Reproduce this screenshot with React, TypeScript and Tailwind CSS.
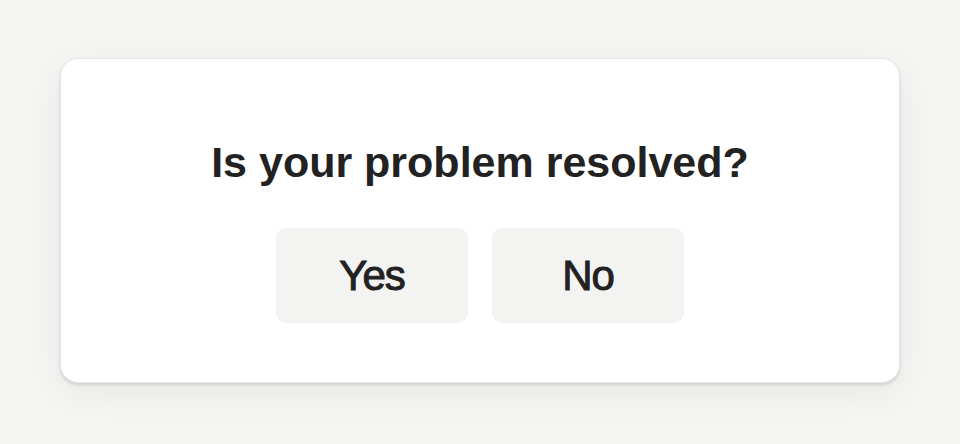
export default function App() {
  return (
    <div className="flex h-[444px] w-full items-start justify-center bg-[#f5f5f4] px-[60px] pt-[58px] font-['Liberation_Sans',Arial,sans-serif]">
      <div className="flex w-full flex-col items-center rounded-[18px] border border-[#e4e4e2] bg-white px-10 pt-[78px] pb-[59px] shadow-[0_2px_3px_rgba(0,0,0,0.12),0_10px_40px_rgba(0,0,0,0.06)]">
        <h1 className="text-[43px] leading-[50px] font-bold text-[#222222]">Is your problem resolved?</h1>
        <div className="mt-[41px] flex gap-6">
          <button className="h-[95px] w-[192px] rounded-[10px] bg-[#f3f3f2] text-[42px] tracking-[-1px] text-[#222222] [-webkit-text-stroke:1px_#222222]">Yes</button>
          <button className="h-[95px] w-[192px] rounded-[10px] bg-[#f3f3f2] text-[42px] tracking-[-1px] text-[#222222] [-webkit-text-stroke:1px_#222222]">No</button>
        </div>
      </div>
    </div>
  );
}
